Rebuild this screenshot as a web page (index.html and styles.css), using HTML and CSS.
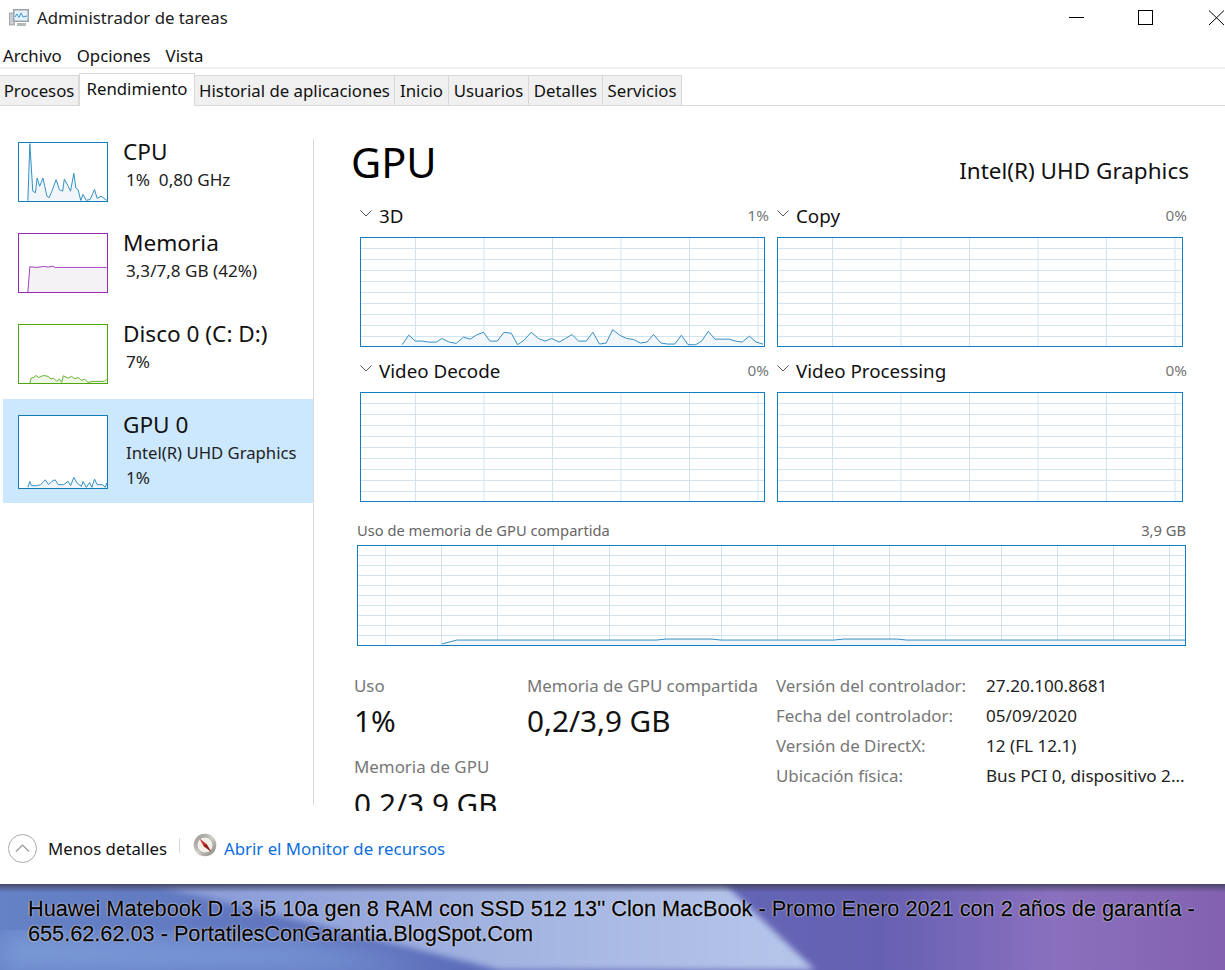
FILE: index.html
```html
<!DOCTYPE html>
<html lang="es">
<head>
<meta charset="utf-8">
<title>Administrador de tareas</title>
<link rel="stylesheet" href="styles.css">
</head>
<body>
<div class="app">
  <header class="titlebar">
    <svg class="appicon" viewBox="0 0 20 20" width="20" height="20">
      <rect x="0.5" y="5" width="5" height="12" fill="#c9cdd0" stroke="#8b9094" stroke-width="0.7"/>
      <rect x="4" y="1" width="16" height="13" fill="#9aa3a8"/>
      <rect x="5.5" y="2.5" width="13" height="10" fill="#e4f1fa"/>
      <polyline points="6,9 8,6 10,9.5 12,5 14,9 18,8" fill="none" stroke="#3f9ad6" stroke-width="1"/>
      <rect x="8" y="15" width="9" height="3" fill="#b4b9bc"/>
    </svg>
    <span class="title">Administrador de tareas</span>
    <div class="controls">
      <svg class="ctl" viewBox="0 0 16 16" width="16" height="16"><path d="M1 7.5H16" stroke="#000" fill="none"/></svg>
      <svg class="ctl" viewBox="0 0 16 16" width="16" height="16"><rect x="0.5" y="0.5" width="14" height="14" stroke="#000" fill="none"/></svg>
      <svg class="ctl" viewBox="0 0 16 16" width="16" height="16"><path d="M1 0.5L16 15M16 0.5L1 15" stroke="#000" fill="none"/></svg>
    </div>
  </header>

  <nav class="menubar">
    <span>Archivo</span><span>Opciones</span><span>Vista</span>
  </nav>

  <div class="tabs">
    <span class="tab t1">Procesos</span>
    <span class="tab t2 active">Rendimiento</span>
    <span class="tab t3">Historial de aplicaciones</span>
    <span class="tab t4">Inicio</span>
    <span class="tab t5">Usuarios</span>
    <span class="tab t6">Detalles</span>
    <span class="tab t7">Servicios</span>
  </div>

  <main class="main">
    <aside class="sidebar">
      <div class="item">
        <div class="thumb cpu">
          <svg class="fill" viewBox="55 428 268 177" preserveAspectRatio="none">
            <polygon class="area-blue" points="82,604 88,430 97,575 105,580 110,535 118,560 128,535 140,590 147,595 155,575 168,540 178,570 188,575 193,538 205,560 212,575 222,520 228,565 235,570 243,603 250,585 260,603 272,600 285,570 293,597 305,590 322,603 322,605 82,605"/>
            <polyline class="line-blue" points="82,604 88,430 97,575 105,580 110,535 118,560 128,535 140,590 147,595 155,575 168,540 178,570 188,575 193,538 205,560 212,575 222,520 228,565 235,570 243,603 250,585 260,603 272,600 285,570 293,597 305,590 322,603"/>
          </svg>
        </div>
        <div class="meta">
          <div class="name">CPU</div>
          <div class="sub num">1%&nbsp; 0,80 GHz</div>
        </div>
      </div>
      <div class="item">
        <div class="thumb mem">
          <svg class="fill" viewBox="55 70 268 177" preserveAspectRatio="none">
            <polygon class="area-mem" points="82,247 88,170 110,172 130,169 145,171 158,168 165,172 322,172 322,247"/>
            <polyline class="line-mem" points="82,247 88,170 110,172 130,169 145,171 158,168 165,172 322,172"/>
          </svg>
        </div>
        <div class="meta">
          <div class="name">Memoria</div>
          <div class="sub num">3,3/7,8 GB (42%)</div>
        </div>
      </div>
      <div class="item">
        <div class="thumb disk">
          <svg class="fill" viewBox="55 343 268 177" preserveAspectRatio="none">
            <polygon class="area-disk" points="88,520 92,505 100,503 107,497 115,503 122,500 130,497 145,500 152,508 160,505 170,515 178,508 185,518 190,498 205,505 215,500 225,507 235,503 245,512 255,508 265,518 280,515 315,515 322,508 322,520"/>
            <polyline class="line-disk" points="88,520 92,505 100,503 107,497 115,503 122,500 130,497 145,500 152,508 160,505 170,515 178,508 185,518 190,498 205,505 215,500 225,507 235,503 245,512 255,508 265,518 280,515 315,515 322,508"/>
          </svg>
        </div>
        <div class="meta">
          <div class="name">Disco 0 (C: D:)</div>
          <div class="sub num">7%</div>
        </div>
      </div>
      <div class="item selected">
        <div class="thumb gpu">
          <svg class="fill" viewBox="55 616 268 219" preserveAspectRatio="none">
            <polygon class="area-blue" points="82,833 88,815 93,828 108,828 120,825 128,818 135,810 145,825 155,815 165,810 175,825 190,825 205,815 212,828 222,803 232,820 245,830 250,815 260,833 270,818 277,833 285,808 293,825 310,825 318,833 322,820 322,835 82,835"/>
            <polyline class="line-blue" points="82,833 88,815 93,828 108,828 120,825 128,818 135,810 145,825 155,815 165,810 175,825 190,825 205,815 212,828 222,803 232,820 245,830 250,815 260,833 270,818 277,833 285,808 293,825 310,825 318,833 322,820"/>
          </svg>
        </div>
        <div class="meta">
          <div class="name">GPU 0</div>
          <div class="sub">Intel(R) UHD Graphics</div>
          <div class="sub num">1%</div>
        </div>
      </div>
    </aside>

    <section class="panel">
      <div class="head">
        <h1>GPU</h1>
        <div class="adapter">Intel(R) UHD Graphics</div>
      </div>

      <div class="gauges">
        <div class="gauge">
          <div class="gauge-label">
            <svg class="chev" viewBox="0 0 12 7" width="12" height="7"><path d="M0.5 0.5L6 6L11.5 0.5" fill="none" stroke="#555"/></svg>
            <span class="gauge-name">3D</span><span class="pct">1%</span>
          </div>
          <div class="chart">
            <svg class="fill" viewBox="31 112 1215 330" preserveAspectRatio="none">
              <polygon class="area-blue" points="155,438 175,409 195,427 215,427 235,430 258,430 275,419 297,430 318,434 340,415 360,421 380,408 400,400 420,427 442,427 462,400 484,403 503,438 523,424 544,400 566,419 586,427 606,419 628,430 648,419 667,407 687,427 710,427 730,400 750,436 770,433 790,392 812,410 832,419 853,422 873,433 893,430 913,407 935,433 955,436 977,436 997,409 1017,438 1040,438 1058,427 1078,397 1098,421 1120,421 1140,421 1160,427 1180,430 1202,412 1222,430 1243,436 1243,440 155,440"/>
              <polyline class="line-blue" points="155,438 175,409 195,427 215,427 235,430 258,430 275,419 297,430 318,434 340,415 360,421 380,408 400,400 420,427 442,427 462,400 484,403 503,438 523,424 544,400 566,419 586,427 606,419 628,430 648,419 667,407 687,427 710,427 730,400 750,436 770,433 790,392 812,410 832,419 853,422 873,433 893,430 913,407 935,433 955,436 977,436 997,409 1017,438 1040,438 1058,427 1078,397 1098,421 1120,421 1140,421 1160,427 1180,430 1202,412 1222,430 1243,436"/>
            </svg>
          </div>
        </div>
        <div class="gauge">
          <div class="gauge-label">
            <svg class="chev" viewBox="0 0 12 7" width="12" height="7"><path d="M0.5 0.5L6 6L11.5 0.5" fill="none" stroke="#555"/></svg>
            <span class="gauge-name">Copy</span><span class="pct">0%</span>
          </div>
          <div class="chart"></div>
        </div>
        <div class="gauge">
          <div class="gauge-label">
            <svg class="chev" viewBox="0 0 12 7" width="12" height="7"><path d="M0.5 0.5L6 6L11.5 0.5" fill="none" stroke="#555"/></svg>
            <span class="gauge-name">Video Decode</span><span class="pct">0%</span>
          </div>
          <div class="chart"></div>
        </div>
        <div class="gauge">
          <div class="gauge-label">
            <svg class="chev" viewBox="0 0 12 7" width="12" height="7"><path d="M0.5 0.5L6 6L11.5 0.5" fill="none" stroke="#555"/></svg>
            <span class="gauge-name">Video Processing</span><span class="pct">0%</span>
          </div>
          <div class="chart"></div>
        </div>
      </div>

      <div class="shared">
        <div class="shared-label"><span>Uso de memoria de GPU compartida</span><span>3,9 GB</span></div>
        <div class="chart wide">
          <svg class="fill" viewBox="0 0 829 100" preserveAspectRatio="none">
            <polygon class="area-blue" points="84,99 99,95 299,95 309,94 354,94 364,95 477,95 487,94 540,94 550,95 829,95 829,100 84,100"/>
            <polyline class="line-blue" points="84,99 99,95 299,95 309,94 354,94 364,95 477,95 487,94 540,94 550,95 829,95"/>
          </svg>
        </div>
      </div>

      <div class="stats">
        <div class="stat-col one">
          <div class="stat-label">Uso</div>
          <div class="stat-value">1%</div>
          <div class="stat-label second">Memoria de GPU</div>
          <div class="stat-value clipped">0,2/3,9 GB</div>
        </div>
        <div class="stat-col two">
          <div class="stat-label">Memoria de GPU compartida</div>
          <div class="stat-value">0,2/3,9 GB</div>
        </div>
        <dl class="props">
          <dt>Versión del controlador:</dt><dd>27.20.100.8681</dd>
          <dt>Fecha del controlador:</dt><dd>05/09/2020</dd>
          <dt>Versión de DirectX:</dt><dd>12 (FL 12.1)</dd>
          <dt>Ubicación física:</dt><dd>Bus PCI 0, dispositivo 2...</dd>
        </dl>
      </div>
    </section>
  </main>

  <footer class="footer">
    <svg class="less" viewBox="0 0 29 29" width="29" height="29">
      <circle cx="14.5" cy="14.5" r="14" fill="#fff" stroke="#aaa"/>
      <path d="M8 17.5L14.5 11L21 17.5" fill="none" stroke="#999" stroke-width="1.2"/>
    </svg>
    <span class="less-label">Menos detalles</span>
    <span class="divider"></span>
    <svg class="compass" viewBox="0 0 24 24" width="24" height="24">
      <defs>
        <linearGradient id="ring" x1="0" y1="0" x2="1" y2="1">
          <stop offset="0" stop-color="#8a8a86"/>
          <stop offset="0.5" stop-color="#d2d0c8"/>
          <stop offset="1" stop-color="#7d7b74"/>
        </linearGradient>
      </defs>
      <circle cx="12" cy="12" r="11.3" fill="url(#ring)"/>
      <circle cx="12" cy="12" r="8" fill="#f2efe9" stroke="#8f8d88" stroke-width="0.6"/>
      <path d="M6.5 5.5L13.5 11L18 18.5L10.5 13Z" fill="#c9302c"/>
      <path d="M10.5 13L13.5 11L18 18.5Z" fill="#8d1f1c"/>
    </svg>
    <span class="link">Abrir el Monitor de recursos</span>
  </footer>

  <div class="banner">
    <svg class="banner-art" viewBox="0 0 1225 86" preserveAspectRatio="none" aria-hidden="true">
      <defs>
        <linearGradient id="bgL" x1="0" y1="0" x2="1" y2="0">
          <stop offset="0" stop-color="#6582c6"/>
          <stop offset="0.38" stop-color="#5d6dba"/>
          <stop offset="0.72" stop-color="#6660b3"/>
          <stop offset="0.86" stop-color="#8a70be"/>
          <stop offset="1" stop-color="#8361b0"/>
        </linearGradient>
        <linearGradient id="wedge" x1="0" y1="0" x2="1" y2="0">
          <stop offset="0" stop-color="#8598d6"/>
          <stop offset="0.55" stop-color="#a3b4e1"/>
          <stop offset="1" stop-color="#b6c6ea"/>
        </linearGradient>
        <linearGradient id="top" x1="0" y1="0" x2="0" y2="1">
          <stop offset="0" stop-color="#3e3e58" stop-opacity="0.85"/>
          <stop offset="0.1" stop-color="#4a4a66" stop-opacity="0"/>
        </linearGradient>
        <filter id="soft"><feGaussianBlur stdDeviation="3"/></filter>
        <filter id="softer"><feGaussianBlur stdDeviation="14"/></filter>
      </defs>
      <rect width="1225" height="86" fill="url(#bgL)"/>
      <polygon points="0,50 300,60 440,86 0,86" fill="#7b9bd8" filter="url(#softer)"/>
      <polygon points="150,0 725,0 815,86 500,86" fill="url(#wedge)" filter="url(#soft)"/>
      <rect width="1225" height="86" fill="url(#top)"/>
    </svg>
    <p class="promo">Huawei Matebook D 13 i5 10a gen 8 RAM con SSD 512 13'' Clon MacBook - Promo Enero 2021 con 2 años de garantía - 655.62.62.03 - PortatilesConGarantia.BlogSpot.Com</p>
  </div>
</div>
</body>
</html>
```
FILE: styles.css
```css
* { box-sizing: border-box; }
html, body { margin: 0; padding: 0; background: #fff; }
body { font-family: "Noto Sans", "Open Sans", sans-serif; color: #000; overflow: hidden; }
.app { width: 1225px; height: 970px; display: flex; flex-direction: column; overflow: hidden; }

.titlebar { height: 35px; display: flex; align-items: center; padding-left: 9px; flex: none; }
.appicon { flex: none; margin-right: 8px; }
.title { font-size: 16.8px; color: #222; }
.controls { margin-left: auto; display: flex; align-items: flex-start; gap: 54px; margin-right: 1px; height: 16px; }
.ctl { flex: none; display: block; }

.menubar { height: 34px; flex: none; display: flex; align-items: center; gap: 15px; padding: 9px 0 0 3px; font-size: 16.8px; border-bottom: 2px solid #f0f0f0; color: #111; }

.tabs { height: 37px; flex: none; display: flex; align-items: flex-end; border-bottom: 1px solid #d9d9d9; padding-top: 4px; }
.tab { height: 30px; background: #f0f0f0; border: 1px solid #d9d9d9; border-left: none; border-bottom: none; font-size: 16.8px; display: flex; align-items: center; justify-content: center; color: #111; flex: none; white-space: nowrap; }
.tab.active { height: 33px; background: #fff; margin-bottom: -1px; border-left: 1px solid #d9d9d9; padding: 0 0 3px; }
.t1 { width: 79px; }
.t2 { width: 116px; }
.t3 { width: 200px; }
.t4 { width: 54px; }
.t5 { width: 80px; }
.t6 { width: 74px; }
.t7 { width: 79px; }

.main { flex: none; height: 724px; display: flex; }

.sidebar { width: 314px; flex: none; padding: 20px 0 0 3px; position: relative; }
.sidebar::after { content: ""; position: absolute; right: 0; top: 33px; height: 666px; width: 1px; background: #d9d9d9; }
.item { height: 91px; display: flex; padding: 16px 0 0 15px; }
.item.selected { height: 104px; background: #cce8ff; width: 310px; }
.thumb { width: 90px; height: 60px; border: 1px solid #117dbb; background: #fff; flex: none; overflow: hidden; }
.thumb.gpu { height: 74px; }
.thumb.mem { border-color: #9528b4; }
.thumb.disk { border-color: #4da60c; }
.fill { display: block; width: 100%; height: 100%; }
.area-blue { fill: #f1f6fa; }
.line-blue { fill: none; stroke: #117dbb; stroke-width: 1; vector-effect: non-scaling-stroke; opacity: 0.85; }
.area-mem { fill: #f4f2f4; }
.line-mem { fill: none; stroke: #9528b4; stroke-width: 1; vector-effect: non-scaling-stroke; opacity: 0.85; }
.area-disk { fill: #eff7e6; }
.line-disk { fill: none; stroke: #4da60c; stroke-width: 1; vector-effect: non-scaling-stroke; opacity: 0.85; }
.meta { margin-left: 15px; margin-top: -4px; }
.name { font-size: 22.6px; line-height: 28px; color: #111; white-space: nowrap; }
.sub { font-size: 16.7px; line-height: 25px; color: #222; margin: 1px 0 -1px 3px; white-space: nowrap; }
.sub.num { font-size: 17.1px; }

.panel { width: 911px; height: 705px; flex: none; overflow: hidden; padding: 30px 0 0 38px; }
.head { height: 64px; width: 837px; display: flex; justify-content: space-between; align-items: flex-start; }
h1 { margin: 0 0 0 -1px; font-size: 41.5px; font-weight: 400; line-height: 52px; color: #000; }
.adapter { font-size: 22.5px; line-height: 30px; margin-top: 20px; color: #111; }

.gauges { display: grid; grid-template-columns: 405px 406px; column-gap: 12px; row-gap: 8px; margin-left: 8px; }
.gauge-label { height: 37px; display: flex; align-items: flex-start; }
.chev { flex: none; margin-top: 10px; margin-right: 7px; }
.gauge-name { font-size: 18.8px; line-height: 25px; margin-top: 4px; color: #111; }
.pct { margin-left: auto; margin-right: -4px; font-size: 15.3px; line-height: 20px; margin-top: 5px; color: #777; }
.chart { height: 110px; border: 1px solid #0f7fc5; overflow: hidden; background-color: #fff;
  background-image: linear-gradient(to right, #d3e4f1 1px, transparent 1px), linear-gradient(to bottom, #d3e4f1 1px, transparent 1px);
  background-size: 68.5px 100%, 100% 11px;
  background-position: 54px 0, 0 10px; }
.chart.wide { height: 101px; width: 829px; background-size: 56px 100%, 100% 10px; background-position: 27px 0, 0 9px; }

.shared { margin: 16px 0 0 5px; width: 829px; }
.shared-label { display: flex; justify-content: space-between; height: 27px; font-size: 14.7px; line-height: 24px; color: #666; }

.stats { display: flex; margin: 25px 0 0 2px; }
.stat-col.one { width: 173px; flex: none; }
.stat-col.two { width: 249px; flex: none; }
.stat-label { font-size: 16.9px; line-height: 30px; color: #777; white-space: nowrap; }
.stat-label.second { margin-top: 11px; }
.stat-value { font-size: 29.7px; line-height: 40px; color: #111; white-space: nowrap; }
.stat-value.clipped { margin-top: 2px; }
.props { margin: 0; display: grid; grid-template-columns: 210px auto; grid-auto-rows: 30px; font-size: 16.9px; line-height: 30px; }
.props dt { color: #777; white-space: nowrap; }
.props dd { margin: 0; color: #222; white-space: nowrap; font-size: 17.1px; }

.footer { height: 54px; flex: none; display: flex; align-items: center; padding: 0 0 18px 8px; font-size: 16.8px; }
.less { flex: none; margin-right: 11px; }
.less-label { color: #111; }
.divider { width: 1px; height: 15px; background: #d9d9d9; margin: -6px 0 0 12px; }
.compass { flex: none; margin: -6px 7px 0 13px; }
.link { color: #0a6ee0; font-size: 16.8px; }

.banner { height: 86px; flex: none; position: relative; overflow: hidden; padding: 12px 20px 0 28px; }
.banner-art { position: absolute; inset: 0; width: 100%; height: 100%; }
.promo { position: relative; margin: 0; font-family: "Liberation Sans", Arial, sans-serif; font-size: 21.7px; line-height: 25px; color: #000; -webkit-text-stroke: 0.3px #000; text-shadow: 0 0 2px #fff, 0 0 1px #fff; }
```
